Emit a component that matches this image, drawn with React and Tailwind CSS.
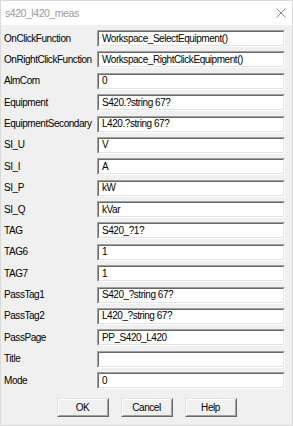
const fields = [
  {label: "OnClickFunction", value: "Workspace_SelectEquipment()"},
  {label: "OnRightClickFunction", value: "Workspace_RightClickEquipment()"},
  {label: "AlmCom", value: "0"},
  {label: "Equipment", value: "S420.?string 67?"},
  {label: "EquipmentSecondary", value: "L420.?string 67?"},
  {label: "SI_U", value: "V"},
  {label: "SI_I", value: "A"},
  {label: "SI_P", value: "kW"},
  {label: "SI_Q", value: "kVar"},
  {label: "TAG", value: "S420_?1?"},
  {label: "TAG6", value: "1"},
  {label: "TAG7", value: "1"},
  {label: "PassTag1", value: "S420_?string 67?"},
  {label: "PassTag2", value: "L420_?string 67?"},
  {label: "PassPage", value: "PP_S420_L420"},
  {label: "Title", value: ""},
  {label: "Mode", value: "0"},
];

function Field({label, value}) {
  return (
    <div className="flex items-center h-[17px]">
      <div className="w-[96px] pl-[3px] text-black whitespace-nowrap">{label}</div>
      {/* sunken edit box */}
      <div className="w-[188px] h-[17px] border border-t-[#a0a0a0] border-l-[#a0a0a0] border-r-white border-b-white">
        <div className="h-full border border-t-[#696969] border-l-[#696969] border-r-[#e3e3e3] border-b-[#e3e3e3] bg-white flex items-center pl-[3px] text-black whitespace-nowrap overflow-hidden">
          {value}
        </div>
      </div>
    </div>
  );
}

function Button({children}) {
  return (
    <div className="w-[52px] h-[19px] border border-t-[#e3e3e3] border-l-[#e3e3e3] border-r-[#696969] border-b-[#696969]">
      <div className="h-full border border-t-white border-l-white border-r-[#a0a0a0] border-b-[#a0a0a0] bg-[#f0f0f0] flex items-center justify-center text-black">
        {children}
      </div>
    </div>
  );
}

export default function App() {
  return (
    <div
      className="w-[293px] h-[426px] bg-[#f0f0f0] flex flex-col border border-[#dadada] text-[10px] tracking-[-0.45px] leading-none"
      style={{fontFamily: '"Liberation Sans", Arial, sans-serif'}}
    >
      {/* Title bar */}
      <div className="h-[24px] bg-white flex items-center justify-between pl-[4px] pr-[5px] shrink-0">
        <span className="text-[#9a9a9a] text-[10.5px]">s420_l420_meas</span>
        <svg width="10" height="10" viewBox="0 0 10 10" className="mr-[1px]">
          <path d="M0.5 0.5 L9.5 9.5 M9.5 0.5 L0.5 9.5" stroke="#8a8a8a" strokeWidth="1" fill="none" />
        </svg>
      </div>

      <div className="flex flex-col gap-[4.375px] pt-[5px]">
        {fields.map((f) => (
          <Field key={f.label} label={f.label} value={f.value} />
        ))}
      </div>

      <div className="flex justify-center gap-[12px] mt-[9px]">
        <Button>OK</Button>
        <Button>Cancel</Button>
        <Button>Help</Button>
      </div>
    </div>
  );
}
